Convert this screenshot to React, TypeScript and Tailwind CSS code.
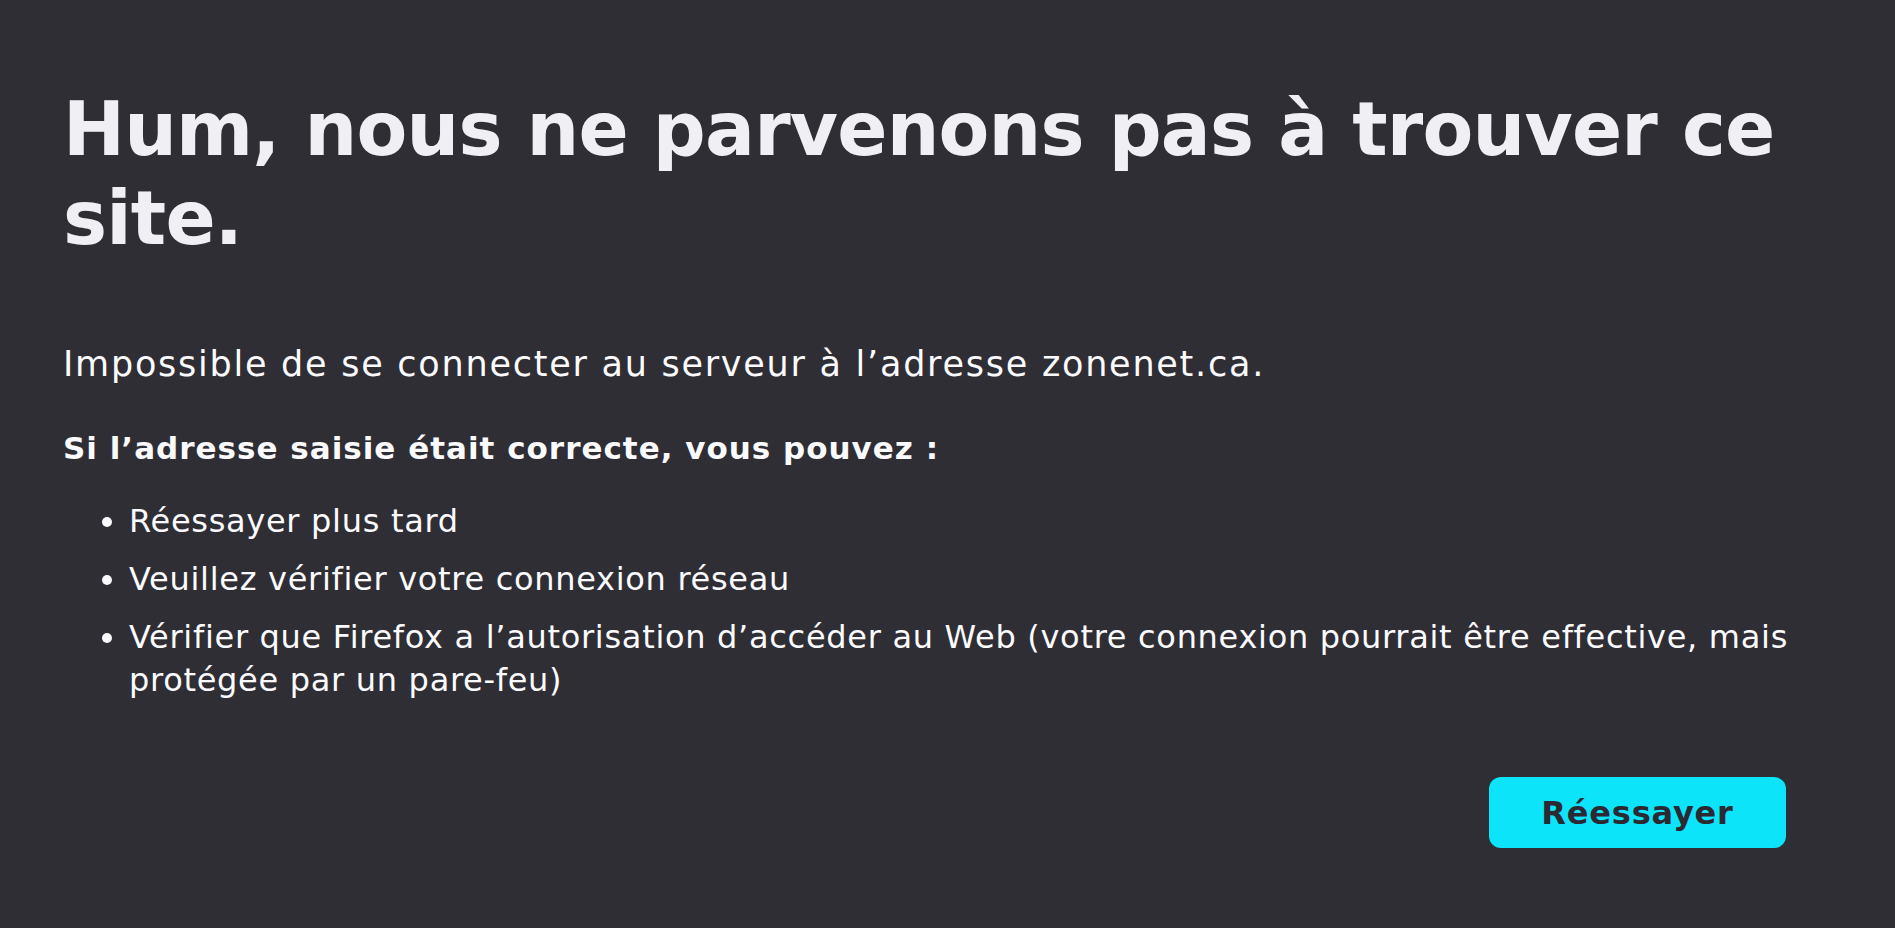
import React from 'react';

const tips = [
  'Réessayer plus tard',
  'Veuillez vérifier votre connexion réseau',
  'Vérifier que Firefox a l’autorisation d’accéder au Web (votre connexion pourrait être effective, mais protégée par un pare-feu)',
];

export default function App() {
  return (
    <div className="min-h-screen bg-[#2f2e35] text-[#fbfbfe] font-['DejaVu_Sans',Verdana,sans-serif]">
      <main className="ml-[63px] w-[1723px] pt-[85px]">
        <h1 className="text-[74px] leading-[89px] font-bold tracking-[-0.8px] text-[#f0f0f4]">
          Hum, nous ne parvenons pas à trouver ce site.
        </h1>

        <p className="mt-[79px] text-[35px] leading-[45px] tracking-[1.75px]">
          Impossible de se connecter au serveur à l’adresse zonenet.ca.
        </p>

        <p className="mt-[41px] text-[31px] leading-[40px] font-bold tracking-[1px]">
          Si l’adresse saisie était correcte, vous pouvez :
        </p>

        <ul className="mt-[32px] -mr-[14px] list-disc pl-[66px] text-[32px] leading-[43px] tracking-[0.7px]">
          {tips.map((tip) => (
            <li key={tip} className="mb-[15px] last:mb-0">
              {tip}
            </li>
          ))}
        </ul>

        <div className="mt-[75px] flex justify-end">
          <button className="h-[71px] w-[297px] rounded-[12px] bg-[#0ce4fa] text-[32px] font-bold tracking-[0.8px] text-[#2b2a33]">
            Réessayer
          </button>
        </div>
      </main>
    </div>
  );
}
